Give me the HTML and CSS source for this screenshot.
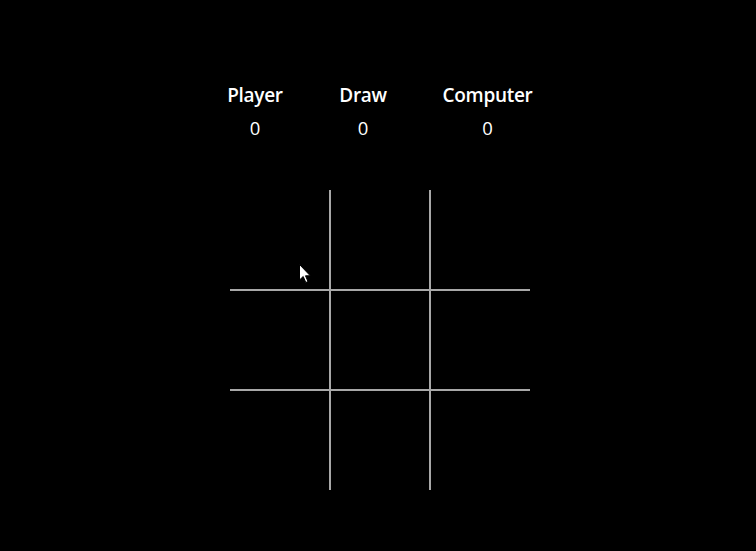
FILE: index.html
```html
<!DOCTYPE html>
<html>
<head>
<meta charset="utf-8">
<link rel="stylesheet" href="styles.css">
</head>
<body>
<main class="game">
  <section class="scores">
    <div class="score">
      <h2 class="label">Player</h2>
      <p class="value">0</p>
    </div>
    <div class="score">
      <h2 class="label">Draw</h2>
      <p class="value">0</p>
    </div>
    <div class="score">
      <h2 class="label">Computer</h2>
      <p class="value">0</p>
    </div>
  </section>
  <section class="board">
    <div class="cell r0 c0"></div>
    <div class="cell r0 c1"></div>
    <div class="cell r0 c2"></div>
    <div class="cell r1 c0"></div>
    <div class="cell r1 c1"></div>
    <div class="cell r1 c2"></div>
    <div class="cell r2 c0"></div>
    <div class="cell r2 c1"></div>
    <div class="cell r2 c2"></div>
  </section>
</main>
<svg class="cursor" width="13" height="20" viewBox="0 0 13 20">
  <path d="M0.5 0.5 L0.5 16 L4.2 12.5 L6.8 18.5 L9 17.6 L6.5 11.8 L11.3 11.8 Z" fill="#fff" stroke="#000" stroke-width="1"/>
</svg>
</body>
</html>
```
FILE: styles.css
```css
html, body {
  margin: 0;
  padding: 0;
  background: #000;
  color: #fff;
  height: 100%;
}
body {
  font-family: "Open Sans", "Lato", sans-serif;
  position: relative;
}
.game {
  display: flex;
  flex-direction: column;
  align-items: center;
  padding-top: 83px;
  padding-left: 4px;
}
.scores {
  display: grid;
  grid-template-columns: 56px 46px 89px;
  column-gap: 57px;
  margin-right: 1px;
}
.score {
  display: flex;
  flex-direction: column;
  align-items: center;
  gap: 9px;
}
.label {
  margin: 0;
  font-size: 19px;
  line-height: 24px;
  font-weight: 600;
  white-space: nowrap;
  letter-spacing: -0.3px;
}
.value {
  margin: 0;
  font-size: 18.5px;
  line-height: 24px;
  font-weight: 400;
}
.board {
  margin-top: 50px;
  display: grid;
  grid-template-columns: repeat(3, 100px);
  grid-template-rows: repeat(3, 100px);
}
.cell {
  box-sizing: border-box;
  border: 0 solid #a8a8a8;
}
.c0, .c1 { border-right-width: 1px; }
.c1, .c2 { border-left-width: 1px; }
.r0, .r1 { border-bottom-width: 1px; }
.r1, .r2 { border-top-width: 1px; }
.cursor {
  position: absolute;
  left: 299px;
  top: 264px;
}
```
